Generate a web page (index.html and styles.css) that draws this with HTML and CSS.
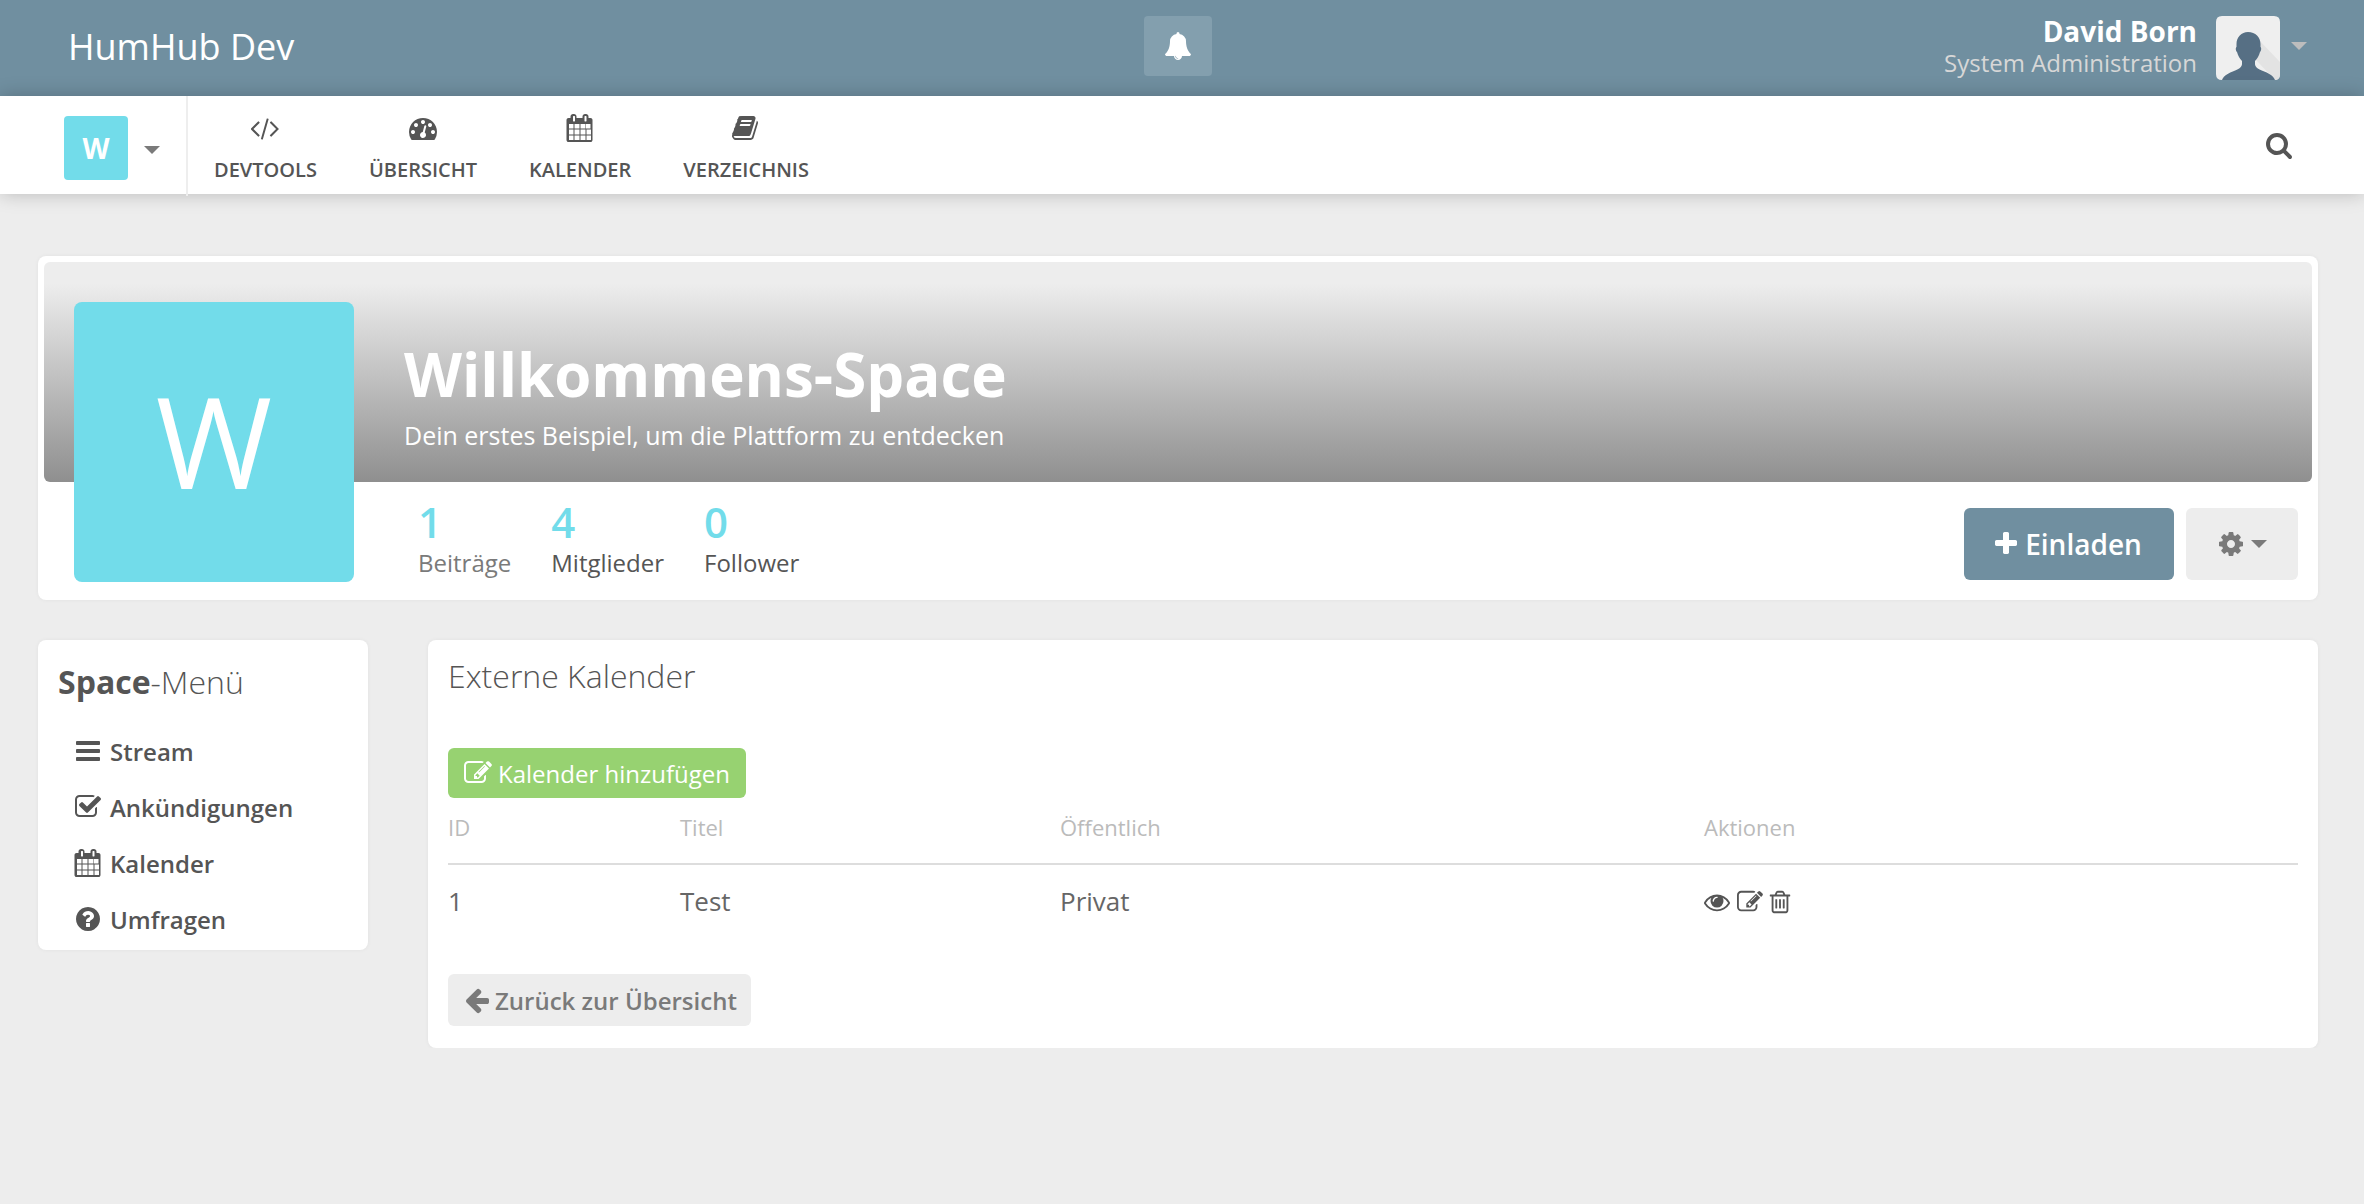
FILE: index.html
```html
<!DOCTYPE html>
<html lang="de">
<head>
    <meta charset="UTF-8">
    <title>HumHub Dev</title>
    <link rel="stylesheet" href="styles.css">
</head>
<body>

    <!-- Icon sprite -->
    <svg class="sprite" xmlns="http://www.w3.org/2000/svg">
        <symbol id="i-bars" viewBox="0 0 1792 1792"><path d="M1664 1344v128q0 26-19 45t-45 19h-1408q-26 0-45-19t-19-45v-128q0-26 19-45t45-19h1408q26 0 45 19t19 45zm0-512v128q0 26-19 45t-45 19h-1408q-26 0-45-19t-19-45v-128q0-26 19-45t45-19h1408q26 0 45 19t19 45zm0-512v128q0 26-19 45t-45 19h-1408q-26 0-45-19t-19-45v-128q0-26 19-45t45-19h1408q26 0 45 19t19 45z"/></symbol>
        <symbol id="i-search" viewBox="0 0 1792 1792"><path d="M1216 832q0-185-131.5-316.5t-316.5-131.5-316.5 131.5-131.5 316.5 131.5 316.5 316.5 131.5 316.5-131.5 131.5-316.5zm512 832q0 52-38 90t-90 38q-54 0-90-38l-343-342q-179 124-399 124-143 0-273.5-55.5t-225-150-150-225-55.5-273.5 55.5-273.5 150-225 225-150 273.5-55.5 273.5 55.5 225 150 150 225 55.5 273.5q0 220-124 399l343 343q37 37 37 90z"/></symbol>
        <symbol id="i-plus" viewBox="0 0 1792 1792"><path d="M1600 736v192q0 40-28 68t-68 28h-416v416q0 40-28 68t-68 28h-192q-40 0-68-28t-28-68v-416h-416q-40 0-68-28t-28-68v-192q0-40 28-68t68-28h416v-416q0-40 28-68t68-28h192q40 0 68 28t28 68v416h416q40 0 68 28t28 68z"/></symbol>
        <symbol id="i-back" viewBox="0 0 1792 1792"><path d="M1664 896v128q0 53-32.5 90.5t-84.5 37.5h-704l293 294q38 36 38 90t-38 90l-75 76q-37 37-90 37-52 0-91-37l-651-652q-37-37-37-90 0-52 37-91l651-650q38-38 91-38 52 0 90 38l75 74q38 38 38 91t-38 91l-293 293h704q52 0 84.5 37.5t32.5 90.5z"/></symbol>
        <symbol id="i-question" viewBox="0 0 1792 1792"><path d="M1024 1376v-192q0-14-9-23t-23-9h-192q-14 0-23 9t-9 23v192q0 14 9 23t23 9h192q14 0 23-9t9-23zm256-672q0-88-55.5-163t-138.5-116-170-41q-243 0-371 213-15 24 8 42l132 100q7 6 19 6 16 0 25-12 53-68 86-92 34-24 86-24 48 0 85.5 26t37.5 59q0 38-20 61t-68 45q-63 28-115.5 86.5t-52.5 125.5v36q0 14 9 23t23 9h192q14 0 23-9t9-23q0-19 21.5-49.5t54.5-49.5q32-18 49-28.5t46-35 44.5-48 28-60.5 12.5-81zm384 192q0 209-103 385.5t-279.5 279.5-385.5 103-385.5-103-279.5-279.5-103-385.5 103-385.5 279.5-279.5 385.5-103 385.5 103 279.5 279.5 103 385.5z"/></symbol>
        <symbol id="i-bell" viewBox="0 0 1792 1792"><path d="M912 1696q0-16-16-16-59 0-101.5-42.5t-42.5-101.5q0-16-16-16t-16 16q0 73 51.5 124.5t124.5 51.5q16 0 16-16zm816-288q0 52-38 90t-90 38h-448q0 106-75 181t-181 75-181-75-75-181h-448q-52 0-90-38t-38-90q50-42 91-88t85-119.5 74.5-158.5 50-206 19.5-260q0-152 117-282.5t307-158.5q-8-19-8-39 0-40 28-68t68-28 68 28 28 68q0 20-8 39 190 28 307 158.5t117 282.5q0 139 19.5 260t50 206 74.5 158.5 85 119.5 91 88z"/></symbol>
        <symbol id="i-cog" viewBox="0 0 1792 1792"><path d="M1152 896q0-106-75-181t-181-75-181 75-75 181 75 181 181 75 181-75 75-181zm512-109v222q0 12-8 23t-20 13l-185 28q-19 54-39 91 35 50 107 138 10 12 10 25t-9 23q-27 37-99 108t-94 71q-12 0-26-9l-138-108q-44 23-91 38-16 136-29 186-7 28-36 28h-222q-14 0-24.5-8.5t-11.5-21.5l-28-184q-49-16-90-37l-141 107q-10 9-25 9-14 0-25-11-126-114-165-168-7-10-7-23 0-12 8-23 15-21 51-66.5t54-70.5q-27-50-41-99l-183-27q-13-2-21-12.5t-8-23.5v-222q0-12 8-23t19-13l186-28q14-46 39-92-40-57-107-138-10-12-10-24 0-10 9-23 26-36 98.5-107.5t94.5-71.5q13 0 26 10l138 107q44-23 91-38 16-136 29-186 7-28 36-28h222q14 0 24.5 8.5t11.5 21.5l28 184q49 16 90 37l142-107q9-9 24-9 13 0 25 10 129 119 165 170 7 8 7 22 0 12-8 23-15 21-51 66.5t-54 70.5q26 50 41 98l183 28q13 2 21 12.5t8 23.5z"/></symbol>
        <symbol id="i-calendar" viewBox="0 0 1792 1792"><path d="M192 1664h288v-288h-288v288zm352 0h320v-288h-320v288zm-352-352h288v-320h-288v320zm352 0h320v-320h-320v320zm-352-384h288v-288h-288v288zm736 736h320v-288h-320v288zm-384-736h320v-288h-320v288zm768 736h288v-288h-288v288zm-384-352h320v-320h-320v320zm-352-864v-288q0-13-9.5-22.5t-22.5-9.5h-64q-13 0-22.5 9.5t-9.5 22.5v288q0 13 9.5 22.5t22.5 9.5h64q13 0 22.5-9.5t9.5-22.5zm736 864h288v-320h-288v320zm-384-384h320v-288h-320v288zm352 0h288v-288h-288v288zm32-480v-288q0-13-9.5-22.5t-22.5-9.5h-64q-13 0-22.5 9.5t-9.5 22.5v288q0 13 9.5 22.5t22.5 9.5h64q13 0 22.5-9.5t9.5-22.5zm384-64v1280q0 52-38 90t-90 38h-1408q-52 0-90-38t-38-90v-1280q0-52 38-90t90-38h128v-96q0-66 47-113t113-47h64q66 0 113 47t47 113v96h384v-96q0-66 47-113t113-47h64q66 0 113 47t47 113v96h128q52 0 90 38t38 90z"/></symbol>
        <symbol id="i-code" viewBox="0 0 1820 1792"><path d="M553 1399l-50 50q-10 10-23 10t-23-10l-466-466q-10-10-10-23t10-23l466-466q10-10 23-10t23 10l50 50q10 10 10 23t-10 23l-393 393 393 393q10 10 10 23t-10 23zm591-1067l-373 1291q-4 13-15.5 19.5t-23.5 2.5l-62-17q-13-4-19.5-15.5t-2.5-24.5l373-1291q4-13 15.5-19.5t23.5-2.5l62 17q13 4 19.5 15.5t2.5 24.5zm657 651l-466 466q-10 10-23 10t-23-10l-50-50q-10-10-10-23t10-23l393-393-393-393q-10-10-10-23t10-23l50-50q10-10 23-10t23 10l466 466q10 10 10 23t-10 23z"/></symbol>
        <symbol id="i-dash" viewBox="0 0 1792 1792"><path d="M384 1152q0-53-37.5-90.5t-90.5-37.5-90.5 37.5-37.5 90.5 37.5 90.5 90.5 37.5 90.5-37.5 37.5-90.5zm192-448q0-53-37.5-90.5t-90.5-37.5-90.5 37.5-37.5 90.5 37.5 90.5 90.5 37.5 90.5-37.5 37.5-90.5zm428 481l101-382q6-26-7.5-48.5t-38.5-29.5-48 6.5-30 39.5l-101 382q-60 5-107 43.5t-63 98.5q-20 77 20 146t117 89 146-20 89-117q16-60-6-117t-72-91zm660-33q0-53-37.5-90.5t-90.5-37.5-90.5 37.5-37.5 90.5 37.5 90.5 90.5 37.5 90.5-37.5 37.5-90.5zm-640-640q0-53-37.5-90.5t-90.5-37.5-90.5 37.5-37.5 90.5 37.5 90.5 90.5 37.5 90.5-37.5 37.5-90.5zm448 192q0-53-37.5-90.5t-90.5-37.5-90.5 37.5-37.5 90.5 37.5 90.5 90.5 37.5 90.5-37.5 37.5-90.5zm320 448q0 261-141 483-19 29-54 29h-1402q-35 0-54-29-141-221-141-483 0-182 71-348t191-286 286-191 348-71 348 71 286 191 191 286 71 348z"/></symbol>
        <symbol id="i-book" viewBox="0 0 1792 1792"><path d="M1639 478q40 57 18 129l-275 906q-19 64-76.5 107.5t-122.5 43.5h-923q-77 0-148.5-53.5t-99.5-131.5q-24-67-2-127 0-4 3-27t4-37q1-8-3-21.5t-3-19.5q2-11 8-21t16.5-23.5 16.5-23.5q23-38 45-91.5t30-91.5q3-10 .5-30t-.5-28q3-11 17-28t17-23q21-36 42-92t25-90q1-9-2.5-32t.5-28q4-13 22-30.5t22-22.5q19-26 42.5-84.5t27.5-96.5q1-8-3-25.5t-2-26.5q2-8 9-18t18-23 17-21q8-12 16.5-30.5t15-35 16-36 19.5-32 26.5-23.5 36-11.5 47.5 5.5l-1 3q38-9 51-9h761q74 0 114 56t18 130l-274 906q-36 119-71.5 153.5t-128.5 34.5h-869q-27 0-38 15-11 16-1 43 24 70 144 70h923q29 0 56-15.5t35-41.5l300-987q7-22 5-57 38 15 59 43zm-1064 2q-4 13 2 22.5t20 9.5h608q13 0 25.5-9.5t16.5-22.5l21-64q4-13-2-22.5t-20-9.5h-608q-13 0-25.5 9.5t-16.5 22.5zm-83 256q-4 13 2 22.5t20 9.5h608q13 0 25.5-9.5t16.5-22.5l21-64q4-13-2-22.5t-20-9.5h-608q-13 0-25.5 9.5t-16.5 22.5z"/></symbol>
        <symbol id="i-eye" viewBox="0 0 1792 1792"><path d="M1664 960q-152-236-381-353 61 104 61 225 0 185-131.5 316.5t-316.5 131.5-316.5-131.5-131.5-316.5q0-121 61-225-229 117-381 353 133 205 333.5 326.5t434.5 121.5 434.5-121.5 333.5-326.5zm-720-384q0-20-14-34t-34-14q-125 0-214.5 89.5t-89.5 214.5q0 20 14 34t34 14 34-14 14-34q0-86 61-147t147-61q20 0 34-14t14-34zm848 384q0 34-20 69-140 230-376.5 368.5t-499.5 138.5-499.5-139-376.5-368q-20-35-20-69t20-69q140-229 376.5-368t499.5-139 499.5 139 376.5 368q20 35 20 69z"/></symbol>
        <symbol id="i-edit" viewBox="0 0 1792 1792"><path d="M888 1184l116-116-152-152-116 116v56h96v96h56zm440-720q-16-16-33 1l-350 350q-17 17-1 33t33-1l350-350q17-17 1-33zm80 594v190q0 119-84.5 203.5t-203.5 84.5h-832q-119 0-203.5-84.5t-84.5-203.5v-832q0-119 84.5-203.5t203.5-84.5h832q63 0 117 25 15 7 18 23 3 17-9 29l-49 49q-14 14-32 8-23-6-45-6h-832q-66 0-113 47t-47 113v832q0 66 47 113t113 47h832q66 0 113-47t47-113v-126q0-13 9-22l64-64q15-15 35-7t20 29zm-96-738l288 288-672 672h-288v-288zm444 132l-92 92-288-288 92-92q28-28 68-28t68 28l152 152q28 28 28 68t-28 68z"/></symbol>
        <symbol id="i-trash" viewBox="0 0 1792 1792"><path d="M704 736v576q0 14-9 23t-23 9h-64q-14 0-23-9t-9-23v-576q0-14 9-23t23-9h64q14 0 23 9t9 23zm256 0v576q0 14-9 23t-23 9h-64q-14 0-23-9t-9-23v-576q0-14 9-23t23-9h64q14 0 23 9t9 23zm256 0v576q0 14-9 23t-23 9h-64q-14 0-23-9t-9-23v-576q0-14 9-23t23-9h64q14 0 23 9t9 23zm128 724v-948h-896v948q0 22 7 40.5t14.5 27 10.5 8.5h832q3 0 10.5-8.5t14.5-27 7-40.5zm-672-1076h448l-48-117q-7-9-17-11h-317q-10 2-17 11zm928 32v64q0 14-9 23t-23 9h-96v948q0 83-47 143.5t-113 60.5h-832q-66 0-113-61.5t-47-145.5v-945h-96q-14 0-23-9t-9-23v-64q0-14 9-23t23-9h309l70-167q15-37 54-63t79-26h320q40 0 79 26t54 63l70 167h309q14 0 23 9t9 23z"/></symbol>
        <symbol id="i-check" viewBox="0 0 1792 1792"><path d="M1472 930v318q0 119-84.5 203.5t-203.5 84.5h-832q-119 0-203.5-84.5t-84.5-203.5v-832q0-119 84.5-203.5t203.5-84.5h832q63 0 117 25 15 7 18 23 3 17-9 29l-49 49q-10 10-23 10-3 0-9-2-23-6-45-6h-832q-66 0-113 47t-47 113v832q0 66 47 113t113 47h832q66 0 113-47t47-113v-254q0-13 9-22l64-64q10-10 23-10 6 0 12 3 20 8 20 29zm231-489l-814 814q-24 24-57 24t-57-24l-430-430q-24-24-24-57t24-57l110-110q24-24 57-24t57 24l263 263 647-647q24-24 57-24t57 24l110 110q24 24 24 57t-24 57z"/></symbol>
    </svg>

    <!-- Top bar -->
    <header class="topbar">
        <div class="brand">HumHub Dev</div>
        <button class="notify-btn"><svg class="icon icon-bell"><use href="#i-bell"/></svg></button>
        <div class="account">
            <div class="account-text">
                <div class="account-name">David Born</div>
                <div class="account-role">System Administration</div>
            </div>
            <svg class="avatar" viewBox="0 0 64 64">
                <path fill="#efefef" d="M6 0h52q6 0 6 6v52q0 6-6 6H6q-6 0-6-6V6q0-6 6-6z"/>
                <path fill="#e3e3e3" d="M41 22 64 46v12q0 6-5 6L40 44z"/>
                <path fill="#566f84" d="M32 16c-6.500 0-11.500 5-11.500 12v3c-1 0-1 4 .5 5 1 4 3 7 5 9v3c0 3-3 5-8 7-5 2-10 4-12 9h53c-2-5-7-7-12-9-5-2-8-4-8-7v-3c2-2 4-5 5-9 1.500-1 1.500-5 .5-5v-3c0-7-5-12-12.500-12z"/>
            </svg>
            <span class="caret caret-light"></span>
        </div>
    </header>

    <!-- Main navigation -->
    <nav class="mainnav">
        <div class="space-chooser">
            <div class="space-tile">W</div>
            <span class="caret caret-nav"></span>
        </div>
        <a class="nav-item"><svg class="icon"><use href="#i-code"/></svg><span>DEVTOOLS</span></a>
        <a class="nav-item"><svg class="icon"><use href="#i-dash"/></svg><span>ÜBERSICHT</span></a>
        <a class="nav-item"><svg class="icon"><use href="#i-calendar"/></svg><span>KALENDER</span></a>
        <a class="nav-item"><svg class="icon"><use href="#i-book"/></svg><span>VERZEICHNIS</span></a>
        <svg class="icon icon-search"><use href="#i-search"/></svg>
    </nav>

    <main class="page">

        <!-- Space header -->
        <section class="space-card">
            <div class="space-avatar">W</div>
            <div class="banner">
                <h1>Willkommens-Space</h1>
                <p>Dein erstes Beispiel, um die Plattform zu entdecken</p>
            </div>
            <div class="space-footer">
                <div class="stats">
                    <div class="stat"><b>1</b><span>Beiträge</span></div>
                    <div class="stat"><b>4</b><span>Mitglieder</span></div>
                    <div class="stat"><b>0</b><span>Follower</span></div>
                </div>
                <div class="space-actions">
                    <button class="btn-invite"><svg class="icon"><use href="#i-plus"/></svg>Einladen</button>
                    <button class="btn-settings"><svg class="icon"><use href="#i-cog"/></svg><span class="caret caret-gear"></span></button>
                </div>
            </div>
        </section>

        <div class="columns">

            <!-- Space menu -->
            <aside class="panel side-menu">
                <h2><strong>Space</strong>-Menü</h2>
                <a class="menu-item"><svg class="icon"><use href="#i-bars"/></svg>Stream</a>
                <a class="menu-item"><svg class="icon"><use href="#i-check"/></svg>Ankündigungen</a>
                <a class="menu-item"><svg class="icon"><use href="#i-calendar"/></svg>Kalender</a>
                <a class="menu-item"><svg class="icon"><use href="#i-question"/></svg>Umfragen</a>
            </aside>

            <!-- External calendars -->
            <section class="panel content">
                <h2>Externe Kalender</h2>
                <button class="btn-add"><svg class="icon"><use href="#i-edit"/></svg>Kalender hinzufügen</button>
                <table>
                    <thead>
                        <tr><th class="col-id">ID</th><th class="col-title">Titel</th><th class="col-public">Öffentlich</th><th>Aktionen</th></tr>
                    </thead>
                    <tbody>
                        <tr>
                            <td>1</td>
                            <td>Test</td>
                            <td>Privat</td>
                            <td>
                                <div class="row-actions">
                                    <svg class="icon"><use href="#i-eye"/></svg>
                                    <svg class="icon"><use href="#i-edit"/></svg>
                                    <svg class="icon icon-trash"><use href="#i-trash"/></svg>
                                </div>
                            </td>
                        </tr>
                    </tbody>
                </table>
                <button class="btn-back"><svg class="icon"><use href="#i-back"/></svg>Zurück zur Übersicht</button>
            </section>

        </div>
    </main>

</body>
</html>
```

FILE: styles.css
```css
* {
    box-sizing: border-box;
}

body {
    margin: 0;
    background: #ededed;
    color: #555;
    font-family: "Open Sans", "Liberation Sans", sans-serif;
    overflow: hidden;
}

button {
    border: none;
    font-family: inherit;
    display: inline-flex;
    align-items: center;
    padding: 0;
}

h1, h2, p {
    margin: 0;
}

.sprite {
    display: none;
}

.icon {
    width: 28px;
    height: 28px;
    fill: currentColor;
    flex: none;
}

.caret {
    display: block;
    width: 0;
    height: 0;
    border-left: 8px solid transparent;
    border-right: 8px solid transparent;
    border-top: 8px solid #7a7a7a;
}

/* Top bar */
.topbar {
    height: 96px;
    background: #708fa0;
    display: flex;
    align-items: flex-start;
    color: #fff;
}

.brand {
    width: 1144px;
    padding: 23px 0 0 68px;
    font-size: 36px;
    line-height: 48px;
}

.notify-btn {
    width: 68px;
    height: 60px;
    margin-top: 16px;
    justify-content: center;
    background: #839fae;
    border-radius: 4px;
    color: #fff;
}

.account {
    flex: 1;
    display: flex;
    justify-content: flex-end;
    align-items: flex-start;
    padding: 16px 84px 0 0;
    position: relative;
}

.account-text {
    text-align: right;
    margin-right: 19px;
}

.account-name {
    font-size: 28px;
    font-weight: 700;
    line-height: 30px;
}

.account-role {
    font-size: 24px;
    line-height: 32px;
    color: #d7d7d7;
    margin-top: 1px;
}

.avatar {
    width: 64px;
    height: 64px;
    display: block;
}

.caret-light {
    position: absolute;
    right: 57px;
    top: 42px;
    border-top-color: #bdbdbd;
}

/* Navigation */
.mainnav {
    height: 98px;
    background: #fff;
    display: flex;
    box-shadow: 0 0 18px rgba(0, 0, 0, 0.22);
    position: relative;
}

.space-chooser {
    width: 188px;
    height: 100px;
    border-right: 2px solid #eee;
    padding: 20px 0 0 64px;
    display: flex;
    align-items: flex-start;
}

.space-tile {
    width: 64px;
    height: 64px;
    border-radius: 4px;
    background: #72dcea;
    color: #fff;
    font-size: 28px;
    font-weight: 700;
    line-height: 64px;
    text-align: center;
}

.caret-nav {
    margin: 30px 0 0 16px;
}

.nav-item {
    padding: 18px 26px 0;
    display: flex;
    flex-direction: column;
    align-items: center;
    color: #555;
    font-size: 20px;
    font-weight: 600;
    line-height: 28px;
}

.nav-item span {
    margin-top: 14px;
}

.icon-search {
    margin: 35px 71px 0 auto;
    width: 28px;
    height: 28px;
}

/* Page */
.page {
    padding: 62px 46px 0 38px;
}

.space-card {
    position: relative;
    height: 344px;
    padding: 6px;
    background: #fff;
    border-radius: 8px;
    box-shadow: 0 0 4px rgba(0, 0, 0, 0.05);
}

.space-avatar {
    position: absolute;
    left: 36px;
    top: 46px;
    width: 280px;
    height: 280px;
    border-radius: 8px;
    background: #72dcea;
    color: #fff;
    font-size: 126px;
    line-height: 276px;
    text-align: center;
}

.banner {
    height: 220px;
    padding: 72px 0 0 360px;
    border-radius: 6px;
    background: linear-gradient(to bottom, #ededed 10%, #8f8f8f 100%);
    color: #fff;
}

.banner h1 {
    font-size: 60px;
    font-weight: 700;
    line-height: 80px;
}

.banner p {
    font-size: 25px;
    line-height: 42px;
}

.space-footer {
    display: flex;
    justify-content: space-between;
    padding: 18px 14px 0 374px;
}

.stats {
    display: flex;
    gap: 40px;
}

.stat b {
    display: block;
    color: #72dcea;
    font-size: 42px;
    font-weight: 600;
    line-height: 44px;
}

.stat span {
    display: block;
    font-size: 24px;
    line-height: 34px;
    margin-top: 2px;
}

.stat:first-child span {
    color: #7a7a7a;
}

.space-actions {
    display: flex;
    gap: 12px;
    margin-top: 8px;
}

.btn-invite {
    width: 210px;
    height: 72px;
    justify-content: center;
    gap: 5px;
    padding-right: 4px;
    background: #708fa0;
    border-radius: 6px;
    color: #fff;
    font-size: 28px;
    font-weight: 600;
}

.btn-settings {
    width: 112px;
    height: 72px;
    justify-content: center;
    gap: 6px;
    background: #ededed;
    border-radius: 6px;
    color: #7a7a7a;
}

/* Lower columns */
.columns {
    display: flex;
    align-items: flex-start;
    gap: 60px;
    margin-top: 40px;
}

.panel {
    background: #fff;
    border-radius: 8px;
    box-shadow: 0 0 4px rgba(0, 0, 0, 0.05);
}

.side-menu {
    width: 330px;
    height: 310px;
    padding: 20px 0 0 20px;
}

.side-menu h2 {
    font-size: 32px;
    font-weight: 300;
    line-height: 44px;
    margin-bottom: 19px;
}

.side-menu strong {
    font-weight: 700;
}

.menu-item {
    height: 56px;
    padding-left: 16px;
    display: flex;
    align-items: center;
    gap: 8px;
    font-size: 24px;
    font-weight: 600;
}

.content {
    flex: 1;
    height: 408px;
    padding: 14px 20px 0;
}

.content h2 {
    font-size: 32px;
    font-weight: 300;
    line-height: 44px;
    margin-bottom: 50px;
}

.btn-add {
    height: 50px;
    padding: 0 16px;
    gap: 6px;
    background: #97d271;
    border-radius: 6px;
    color: #fff;
    font-size: 24px;
}

table {
    width: 100%;
    border-collapse: collapse;
    table-layout: fixed;
}

th {
    height: 66px;
    padding: 0 0 8px;
    border-bottom: 2px solid #ddd;
    text-align: left;
    font-size: 22px;
    font-weight: 400;
    color: #bbb;
}

.col-id {
    width: 232px;
}

.col-title {
    width: 380px;
}

.col-public {
    width: 644px;
}

td {
    height: 73px;
    padding: 0;
    font-size: 26px;
    color: #666;
}

.row-actions {
    display: flex;
    gap: 7px;
    padding-top: 2px;
    color: #555;
}

.row-actions .icon {
    width: 26px;
    height: 26px;
}

.row-actions .icon-trash {
    margin-left: -3px;
}

.btn-back {
    height: 52px;
    margin-top: 37px;
    padding: 0 14px 0 15px;
    gap: 4px;
    background: #ededed;
    border-radius: 6px;
    color: #7a7a7a;
    font-size: 24px;
    font-weight: 600;
}
```
